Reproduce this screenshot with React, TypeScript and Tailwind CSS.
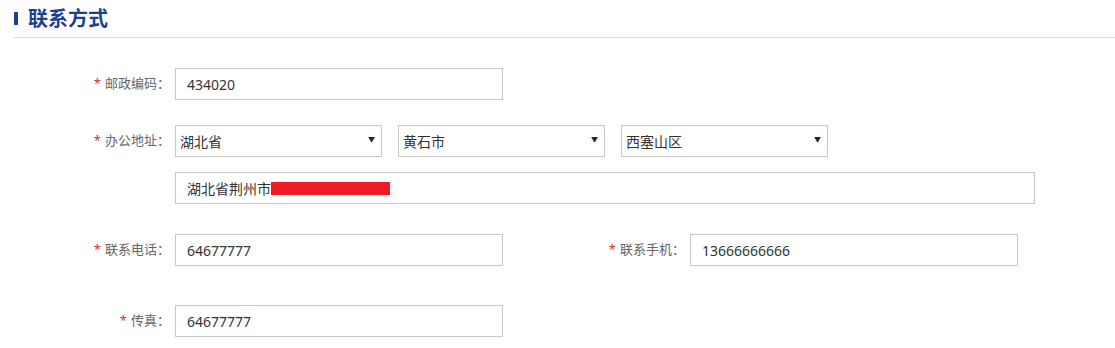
import React from "react";

const font = { fontFamily: '"Noto Sans", "Noto Sans CJK SC", sans-serif' };

// ─── Label with red asterisk ───
function Label({ text }: { text: string }) {
  return (
    <label className="w-[100px] shrink-0 pr-[5px] text-right text-[13px] text-[#666]">
      <span className="text-[#e0282e] mr-[4px]">*</span>
      {text}：
    </label>
  );
}

function TextInput({ value, width = "w-[328px]" }: { value: string; width?: string }) {
  return (
    <input
      readOnly
      value={value}
      className={`${width} h-[32px] border border-[#c8c8c8] bg-white px-[11px] text-[14px] text-[#333] outline-none`}
      style={font}
    />
  );
}

function Select({ value }: { value: string }) {
  return (
    <div className="relative w-[207px] h-[32px]">
      <select
        value={value}
        onChange={() => {}}
        className="w-full h-full appearance-none border border-[#c8c8c8] bg-white pl-[4px] text-[14px] text-[#333] outline-none"
        style={font}
      >
        <option>{value}</option>
      </select>
      <span className="pointer-events-none absolute right-[7px] top-[10px] text-[7px] text-[#222]">▼</span>
    </div>
  );
}

export default function App() {
  return (
    <div className="w-[1115px] h-[348px] overflow-hidden bg-white" style={font}>
      {/* ── Section header ── */}
      <div className="ml-[14px] h-[38px] flex items-center gap-[10px] border-b border-[#d9d9d9]">
        <span className="w-[4px] h-[13px] bg-[#1b3f94]" />
        <h2 className="text-[20px] font-bold text-[#1b3f94] leading-none">联系方式</h2>
      </div>

      {/* ── Form ── */}
      <div className="pl-[75px]">
        <div className="mt-[30px] flex items-center">
          <Label text="邮政编码" />
          <TextInput value="434020" />
        </div>

        <div className="mt-[25px] flex items-center">
          <Label text="办公地址" />
          <div className="flex gap-[16px]">
            <Select value="湖北省" />
            <Select value="黄石市" />
            <Select value="西塞山区" />
          </div>
        </div>

        <div className="mt-[15px] ml-[100px] w-[860px] h-[32px] border border-[#c8c8c8] pl-[11px] flex items-center text-[14px] text-[#333]">
          <span>湖北省荆州市</span>
          <span className="inline-block w-[119px] h-[13px] bg-[#ee1c25]" />
        </div>

        <div className="mt-[30px] flex items-center">
          <Label text="联系电话" />
          <TextInput value="64677777" />
          <div className="ml-[87px] flex items-center">
            <Label text="联系手机" />
            <TextInput value="13666666666" />
          </div>
        </div>

        <div className="mt-[39px] flex items-center">
          <Label text="传真" />
          <TextInput value="64677777" />
        </div>
      </div>
    </div>
  );
}
